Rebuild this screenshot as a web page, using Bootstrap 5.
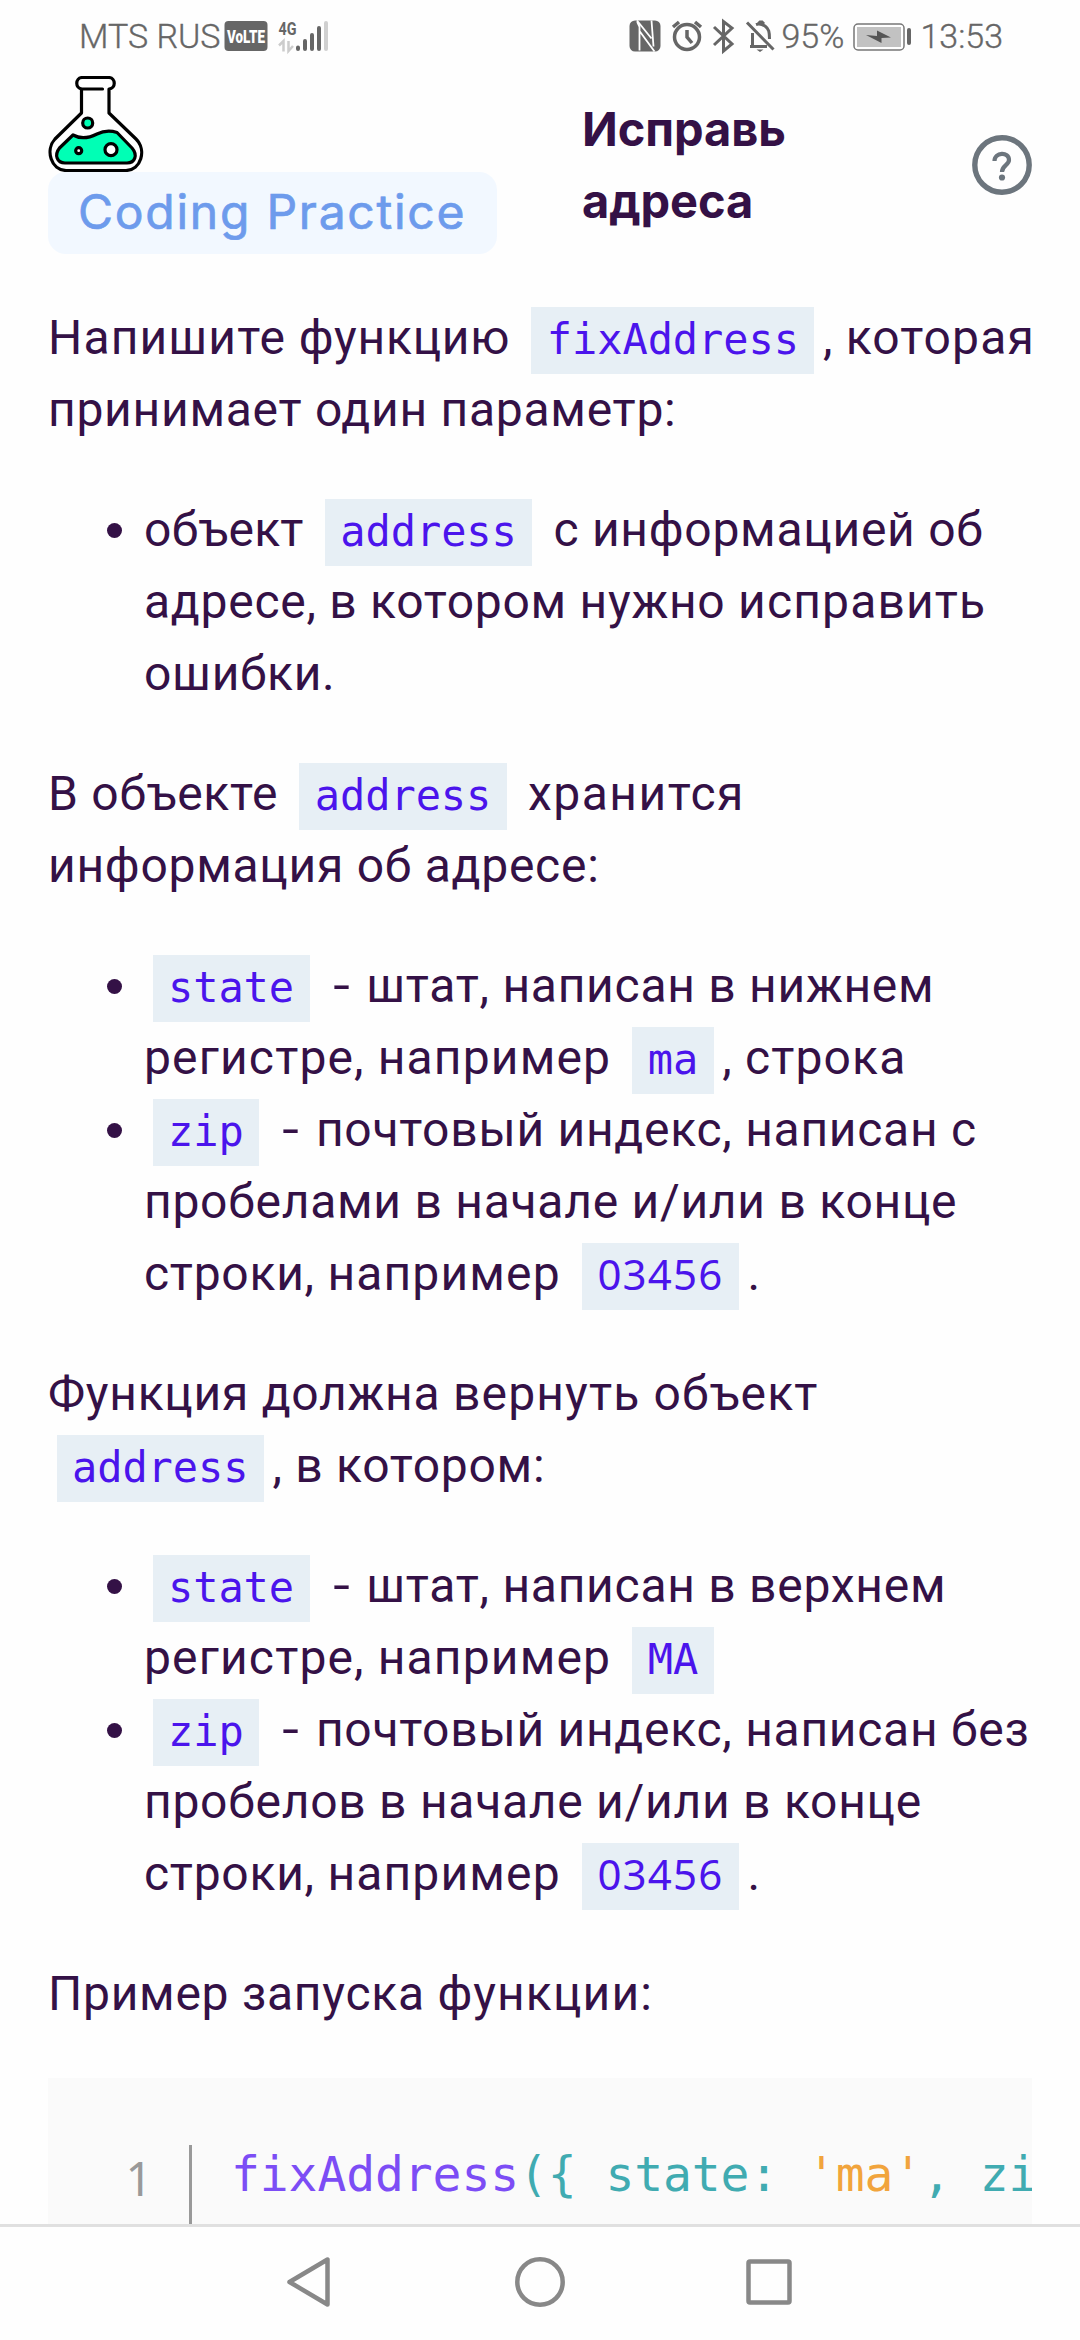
<!DOCTYPE html>
<html lang="ru">
<head>
<meta charset="utf-8">
<meta name="viewport" content="width=device-width, initial-scale=1">
<title>Исправь адреса</title>
<link rel="stylesheet" href="https://cdn.jsdelivr.net/npm/bootstrap@5.3.0/dist/css/bootstrap.min.css">
<style>
html,body{height:2340px;overflow:hidden}
body{background:#fefefe;color:#341146;font:400 48px/72px Roboto,sans-serif;letter-spacing:.73px}
.status{height:76px;padding:16px 77px 0 79px;color:#666;font:400 34px/40px Roboto,sans-serif;letter-spacing:0;flex:none}
.status svg{display:block;flex:none}
.thin{font-weight:300;-webkit-text-stroke:.35px #666}
.topbar{height:178px;padding:0 48px}
.chip{width:449px;height:82px;border-radius:18px;background:#f2f8ff;color:#6d9bec;font:400 48px/80px Inter,sans-serif;-webkit-text-stroke:.7px #6d9bec;letter-spacing:1.75px;text-indent:30px;white-space:nowrap}
.task-title{margin:17px 0 0 85px;font:700 47px/72px Inter,sans-serif;letter-spacing:-.1px;width:300px}
.lesson{padding:48px 48px 0;flex:1;min-height:0;overflow:hidden;white-space:nowrap}
.lesson p,.lesson ul{margin:0 0 48px}
.lesson ul{padding-left:96px}
code.tok{font:42px/1 "DejaVu Sans Mono",monospace;letter-spacing:-.08px;color:#4b14ec;background:#e7eff5;padding:8px 15.5px 10px;margin:0 8.500px}
.num{font-family:"Noto Sans",sans-serif;letter-spacing:1.2px}
.dash{display:inline-block;transform:scaleX(1.25);margin:0 5px 0 4px}
.w1{letter-spacing:1.15px}.w2{letter-spacing:1.5px}.n1{letter-spacing:.25px}
.snippet{height:300px;background:#fafafa;padding-top:67px;overflow:hidden}
.gutter{width:144px;height:240px;border-right:3px solid #999;color:#999;font:47px/67px "Noto Sans",sans-serif;padding-right:36px}
.src{font:48px/58px "DejaVu Sans Mono",monospace;letter-spacing:-.1px;color:#40abb1;padding-left:39px;white-space:pre}
.fn{color:#7c4df5}.str{color:#f1a43c}
.sysnav{height:116px;flex:none;border-top:3px solid #e0e0e0;background:#fefefe}
</style>
<script src="https://cdn.jsdelivr.net/npm/bootstrap@5.3.0/dist/js/bootstrap.bundle.min.js"></script>
</head>
<body class="d-flex flex-column m-0">
<div class="status d-flex justify-content-between">
  <div class="d-flex">
    <span class="thin" style="width:145px">MTS RUS</span>
    <svg width="106" height="40" viewBox="224 16 106 40">
      <rect x="224.5" y="21" width="43" height="30" rx="4" fill="#666"/>
      <text x="246" y="43" text-anchor="middle" font-family="Roboto" font-weight="900" font-size="18" letter-spacing="0" textLength="38" lengthAdjust="spacingAndGlyphs" fill="#fff">VoLTE</text>
      <text x="278.500" y="34.500" font-family="Roboto" font-weight="700" font-size="18" textLength="18" lengthAdjust="spacingAndGlyphs" fill="#666">4G</text>
      <path d="M279 45.500l4.500-4.500v10.500M288.500 41v10l4.500-5" stroke="#ccc" stroke-width="2.500" fill="none"/>
      <g stroke-width="4" stroke-linecap="round" stroke="#666"><path d="M298 47.500v1.500M305 41v8M312 35v14M319 28v21"/><path d="M326 23v26" stroke="#d0d0d0"/></g>
    </svg>
  </div>
  <div class="d-flex">
    <svg width="153" height="40" viewBox="627 16 153 40" fill="none" stroke="#666" stroke-width="3.500">
      <rect x="628.500" y="20.500" width="31" height="31" rx="5.500" fill="#666" stroke="none"/>
      <path d="M636.500 21.500L640 29v21.500M640 29l12.500 20M637.500 20.500l13 18V20.500M650.500 20.500v11l1 17" stroke="none"/>
      <path d="M636.500 21v1.500l2 4.500v23.500M636 20.500l14.500 18M638.500 31l15 20.500M650.500 20.500l2 26" stroke="#fefefe" stroke-width="1.800"/>
      <circle cx="686" cy="37" r="12.500"/><path d="M686 30v7l5 6M672 27l6-5M700 27l-6-5"/>
      <path d="M713 27l18 17-8.500 7V21.500l8.500 6.500-18 17" stroke-width="3"/>
      <path d="M746 22.500l26.500 27M749 46.500h17M751.500 46v-13M755 24.500c3-1 5-1 9 1.500 4 3 4.500 6 4.500 13M757 24l2-2h2l2 2" stroke-width="3"/><path d="M755.500 49.500h7l-3.500 2.500z" fill="#666" stroke="none"/>
    </svg>
    <span class="thin" style="width:71px">95%</span>
    <svg width="68" height="40" viewBox="851 16 68 40">
      <rect x="853" y="24" width="50" height="26" rx="4" fill="#fff" stroke="#777" stroke-width="1.500"/><rect x="856" y="27" width="44" height="20" fill="#c2c2c2"/>
      <path d="M865 35l11 1v-5.500l14 7-9.500.5v5z" fill="#555"/><rect x="906" y="28" width="4" height="17" rx="2" fill="#666"/>
    </svg>
    <span class="thin">13:53</span>
  </div>
</div>
<header class="topbar d-flex align-items-start">
  <div>
    <svg class="d-block" width="96" height="96" viewBox="0 0 96 96" fill="none" stroke="#000" stroke-width="3.200" stroke-linecap="round" stroke-linejoin="round">
      <path d="M25 59c7 4 16 3 24-1 8-4 14-3.500 20-1.500l15 15.500c6 7 3 15-5 15H17c-8 0-11-8-5.500-15z" fill="#00ffb5"/>
      <path d="M54.500 13H34c-7-.5-7-11 0-11.500h27c7 .5 7 11 0 11.500V37l27 26c11 11 5 31-10 31.500H18C3 94 -3 74 7 63L33.500 37V13"/>
      <circle cx="39.700" cy="47" r="5" fill="#00ffb5"/><circle cx="30.700" cy="74.700" r="3" fill="#fff"/><circle cx="63" cy="73.700" r="6" fill="#fff"/>
    </svg>
    <div class="chip">Coding Practice</div>
  </div>
  <h1 class="task-title">Исправь<br>адреса</h1>
  <svg class="ms-auto align-self-start" style="margin-top:59px" width="60" height="60" viewBox="0 0 60 60" fill="none" stroke="#6c757d">
    <circle cx="30" cy="30" r="27.200" stroke-width="5.400"/>
    <path d="M22.500 26c0-9 14.500-9.500 14.500-1 0 5-7 5.500-7 12" stroke-width="4.200"/><circle cx="30" cy="42.500" r="3.100" fill="#6c757d" stroke="none"/>
  </svg>
</header>
<main class="lesson">
  <p><span class="w1">Напишите</span> функцию <code class="tok">fixAddress</code>, <span class="w1">которая</span><br>принимает один параметр:</p>
  <ul><li><span class="n1">объект</span> <code class="tok">address</code> с информацией об<br>адресе, в котором нужно <span class="w1">исправить</span><br>ошибки.</li></ul>
  <p>В объекте <code class="tok">address</code> <span class="w2">хранится</span><br>информация об адресе:</p>
  <ul>
    <li><code class="tok">state</code> <span class="dash">-</span> штат, написан в нижнем<br><span class="w1">регистре, например</span> <code class="tok">ma</code>, <span class="w1">строка</span></li>
    <li><code class="tok">zip</code> <span class="dash">-</span> почтовый индекс, написан с<br>пробелами в начале и/или в конце<br>строки, <span class="w1">например</span> <code class="tok"><span class="num">03456</span></code>.</li>
  </ul>
  <p>Функция должна <span class="w1">вернуть объект</span><br><code class="tok">address</code>, в котором:</p>
  <ul>
    <li><code class="tok">state</code> <span class="dash">-</span> штат, написан в верхнем<br><span class="w1">регистре, например</span> <code class="tok">MA</code></li>
    <li><code class="tok">zip</code> <span class="dash">-</span> почтовый индекс, написан без<br>пробелов в начале и/или в конце<br>строки, <span class="w1">например</span> <code class="tok"><span class="num">03456</span></code>.</li>
  </ul>
  <p>Пример запуска <span class="w1">функции:</span></p>
  <div class="snippet d-flex"><div class="gutter flex-shrink-0 text-end">1</div><div class="src"><span class="fn">fixAddress</span>({ state: <span class="str">'ma'</span>, zi</div></div>
</main>
<nav class="sysnav d-flex justify-content-center">
  <svg width="520" height="113" viewBox="280 2227 520 113" fill="none" stroke="#888" stroke-width="4.500" stroke-linejoin="round">
    <path d="M289.500 2282L327.500 2259.500v45z"/><circle cx="540" cy="2282" r="22.700"/><rect x="748.500" y="2261.500" width="41" height="41" rx="1.500"/>
  </svg>
</nav>
</body>
</html>
